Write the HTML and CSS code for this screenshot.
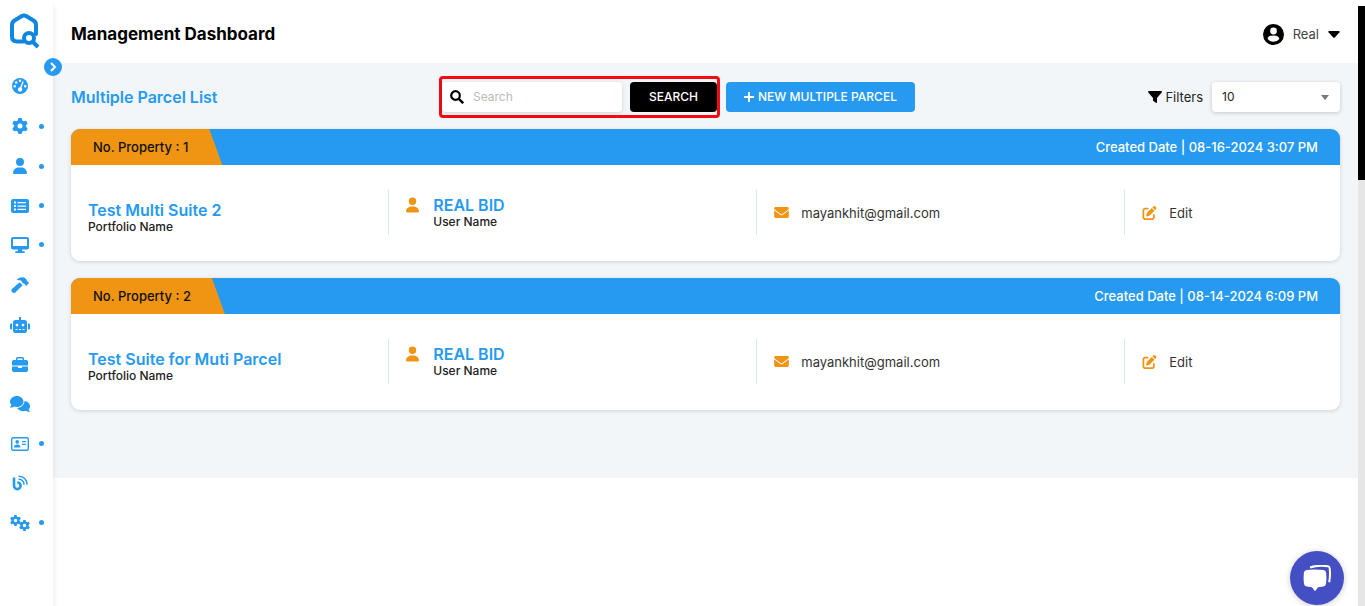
FILE: index.html
```html
<!DOCTYPE html>
<html lang="en">
<head>
<meta charset="utf-8">
<meta name="viewport" content="width=device-width, initial-scale=1">
<title>Management Dashboard</title>
<link rel="stylesheet" href="styles.css">
</head>
<body>
<svg class="sprite" aria-hidden="true">
  <symbol id="gear" viewBox="0 0 512 512"><path d="M495.9 166.6c3.2 8.7 .5 18.4-6.4 24.6l-43.3 39.4c1.1 8.3 1.7 16.8 1.7 25.4s-.6 17.1-1.7 25.4l43.3 39.4c6.9 6.2 9.6 15.9 6.4 24.6c-4.4 11.9-9.7 23.3-15.8 34.3l-4.7 8.1c-6.6 11-14 21.4-22.1 31.2c-5.9 7.2-15.7 9.6-24.5 6.8l-55.7-17.7c-13.4 10.3-28.2 18.9-44 25.4l-12.5 57.1c-2 9.1-9 16.3-18.2 17.8c-13.8 2.3-28 3.5-42.5 3.5s-28.7-1.2-42.5-3.5c-9.2-1.5-16.2-8.7-18.2-17.8l-12.5-57.1c-15.8-6.5-30.6-15.1-44-25.4L83.1 425.9c-8.8 2.8-18.6 .3-24.5-6.8c-8.1-9.8-15.5-20.2-22.1-31.2l-4.7-8.1c-6.1-11-11.4-22.4-15.8-34.3c-3.2-8.7-.5-18.4 6.4-24.6l43.3-39.4C64.6 273.1 64 264.6 64 256s.6-17.1 1.7-25.4L22.4 191.2c-6.9-6.2-9.6-15.9-6.4-24.6c4.4-11.9 9.7-23.3 15.8-34.3l4.7-8.1c6.6-11 14-21.4 22.1-31.2c5.9-7.2 15.7-9.6 24.5-6.8l55.7 17.7c13.4-10.3 28.2-18.9 44-25.4l12.5-57.1c2-9.1 9-16.3 18.2-17.8C227.3 1.2 241.5 0 256 0s28.7 1.2 42.5 3.5c9.2 1.5 16.2 8.7 18.2 17.8l12.5 57.1c15.8 6.5 30.6 15.1 44 25.4l55.7-17.7c8.8-2.8 18.6-.3 24.5 6.8c8.1 9.8 15.5 20.2 22.1 31.2l4.7 8.1c6.1 11 11.4 22.4 15.8 34.3zM256 336a80 80 0 1 0 0-160 80 80 0 1 0 0 160z"/></symbol>
  <symbol id="user" viewBox="0 0 448 512"><path d="M224 256A128 128 0 1 0 224 0a128 128 0 1 0 0 256zm-45.7 48C79.8 304 0 383.8 0 482.3C0 498.7 13.3 512 29.7 512H418.3c16.4 0 29.7-13.3 29.7-29.7C448 383.8 368.2 304 269.7 304H178.3z"/></symbol>
  <symbol id="mail" viewBox="0 0 512 384"><path d="M48 0C21.500 0 0 21.500 0 48c0 15 7 29 19 38l218 163c11 9 27 9 38 0L493 86c12-9 19-23 19-38 0-26.500-21.500-48-48-48zM0 112v208c0 35 29 64 64 64h384c35 0 64-29 64-64V112L294 275c-23 17-53 17-76 0z"/></symbol>
  <symbol id="edit" viewBox="0 0 512 512"><path d="M471.600 21.700c-21.900-21.900-57.300-21.900-79.200 0L362.300 51.700l97.900 97.900 30.100-30.100c21.900-21.900 21.900-57.300 0-79.200zM172.400 241.700c-6.100 6.100-10.800 13.600-13.500 21.800l-29.600 88.800c-2.900 8.600-.6 18.100 5.800 24.600s15.900 8.700 24.600 5.800l88.800-29.600c8.200-2.700 15.700-7.400 21.800-13.500L437.700 172.300 339.700 74.300zM96 64C43 64 0 107 0 160V416c0 53 43 96 96 96H352c53 0 96-43 96-96V320c0-17.700-14.300-32-32-32s-32 14.300-32 32v96c0 17.700-14.300 32-32 32H96c-17.700 0-32-14.300-32-32V160c0-17.700 14.300-32 32-32h96c17.700 0 32-14.300 32-32s-14.300-32-32-32z"/></symbol>
</svg>

<div class="app">
  <aside class="sidebar">
    <a class="logo" href="#" aria-label="Home">
      <svg width="32" height="38" viewBox="0 0 32 38" fill="none" stroke="#0f86e0" stroke-width="4" stroke-linecap="round" stroke-linejoin="round">
        <path d="M14 28.500H8q-5 0-5-5V12q0-3 2.500-4.500l7-4.300q2.500-1.300 5 0l7 4.300Q27 9 27 12v9"/>
        <circle cx="20" cy="25" r="5"/>
        <path d="M24 29l5 5" stroke-linecap="butt"/>
      </svg>
    </a>
    <button class="expand" aria-label="Expand menu"><svg width="8" height="10" viewBox="0 0 8 10"><path d="M2 1l4 4-4 4" fill="none" stroke="#fff" stroke-width="2"/></svg></button>
    <nav class="nav" aria-label="Main">
      <a href="#" aria-label="Dashboard"><svg width="16" height="16" viewBox="0 0 16 16"><circle cx="8" cy="8" r="8"/><g fill="#fff"><circle cx="8" cy="2.800" r="1.200"/><circle cx="4.200" cy="4.500" r="1.200"/><circle cx="2.800" cy="8.200" r="1.200"/><circle cx="13.200" cy="8.200" r="1.200"/><path d="M10.500 3.200l1.300.5-2.300 6a2.200 2.200 0 1 1-1.300-.5z"/></g></svg></a>
      <a class="more" href="#" aria-label="Settings"><svg width="16" height="16"><use href="#gear"/></svg></a>
      <a class="more" href="#" aria-label="Users"><svg width="14" height="16"><use href="#user"/></svg></a>
      <a class="more" href="#" aria-label="Listings"><svg width="18" height="14" viewBox="0 0 18 14"><path fill-rule="evenodd" d="M2 0h14a2 2 0 0 1 2 2v10a2 2 0 0 1-2 2H2a2 2 0 0 1-2-2V2a2 2 0 0 1 2-2zm1 2.500v2h2v-2zm0 3.500v2h2v-2zm0 3.500v2h2v-2zM6.500 3v1.200h8.500V3zm0 3.500v1.200h8.500V6.500zm0 3.300V11h8.500V9.800z"/></svg></a>
      <a class="more" href="#" aria-label="Displays"><svg width="18" height="16" viewBox="0 0 18 16"><path fill-rule="evenodd" d="M2 0h14a2 2 0 0 1 2 2v8.500a2 2 0 0 1-2 2h-5l.4 1.700H13a.9.900 0 0 1 0 1.800H5a.9.900 0 0 1 0-1.800h1.600l.4-1.700H2a2 2 0 0 1-2-2V2a2 2 0 0 1 2-2zm0 2v7h14V2z"/></svg></a>
      <a href="#" aria-label="Auctions"><svg width="18" height="16" viewBox="0 0 18 16"><path d="M6 2.500Q8.500 0 12 .3q1.500.2 2.600 1.300l.9 1q.4.500.3 1.300l1.900 1.400q.4.500 0 1l-2 2.200q-.5.400-1 0l-1.300-1.700q-1 0-1.700-.8l-.8-.9q-.6-.7-.6-1.600L6 3z"/><path d="M8.600 5.200l3 3-7.300 7.200q-1.400 1.200-3 -.2t-.4-3.200z"/></svg></a>
      <a href="#" aria-label="Robot"><svg width="20" height="16" viewBox="0 0 20 16"><path fill-rule="evenodd" d="M9 .8a1 1 0 0 1 2 0V3h3.500A2.500 2.500 0 0 1 17 5.500V13.500a2.500 2.500 0 0 1-2.500 2.500h-9A2.500 2.500 0 0 1 3 13.500v-8A2.500 2.500 0 0 1 5.500 3H9zM7 6.700a1.400 1.400 0 1 0 0 2.800 1.400 1.400 0 0 0 0-2.800zm6 0a1.400 1.400 0 1 0 0 2.800 1.400 1.400 0 0 0 0-2.800zM5.500 12v1h2v-1zm3.500 0v1h2v-1zm3.500 0v1h2v-1zM0 7.500Q0 6.500 1 6.500h1v6H1q-1 0-1-1zM18 6.500h1q1 0 1 1v4q0 1-1 1h-1z"/></svg></a>
      <a href="#" aria-label="Portfolio"><svg width="16" height="15" viewBox="0 0 16 15"><path fill-rule="evenodd" d="M4 3V1.500Q4 0 5.500 0h5Q12 0 12 1.500V3h2.300Q16 3 16 4.700V8.500H0V4.700Q0 3 1.700 3zm1.500 0h5V1.500h-5zM0 9.500h6v.8q0 .7.700.7h2.600q.7 0 .7-.7v-.8h6v3.800q0 1.700-1.700 1.700H1.700Q0 15 0 13.300z"/></svg></a>
      <a href="#" aria-label="Messages"><svg width="20" height="16" viewBox="0 0 20 16"><path d="M6.800 0c3.800 0 6.700 2.500 6.700 5.500S10.600 11 6.800 11c-1 0-1.800-.1-2.600-.4-1 .6-2.300 1.200-3.700 1.200-.4 0-.6-.5-.3-.8.500-.6 1-1.400 1.200-2.200C.5 7.900 0 6.700 0 5.500 0 2.500 3 0 6.800 0z"/><path d="M14.500 5c3 .2 5.500 2.500 5.500 5.200 0 1.200-.5 2.300-1.300 3.200.2.800.7 1.600 1.200 2.100.2.200 0 .5-.3.500-1.400 0-2.600-.6-3.600-1.200-.8.300-1.600.4-2.500.4-3 0-5.400-1.500-6.300-3.300 4-.2 7.200-3.100 7.300-6.900z"/></svg></a>
      <a class="more" href="#" aria-label="Contacts"><svg width="18" height="14" viewBox="0 0 18 14"><rect x=".7" y=".7" width="16.600" height="12.600" rx="1.500" fill="none" stroke="currentColor" stroke-width="1.400"/><circle cx="6.200" cy="4.900" r="1.800"/><path d="M3 10.500q0-3 3.200-3t3.200 3zM11 4h4v1.200h-4zM11 6.700h4v1.200h-4z"/></svg></a>
      <a href="#" aria-label="Blog"><svg width="16" height="16" viewBox="0 0 16 16" fill="none" stroke="currentColor"><path d="M2 2.500v8.300a3.300 3.300 0 1 0 3.300-3.300" stroke-width="2.600"/><path d="M7 1.200a8 8 0 0 1 8 8M7 4.200a5 5 0 0 1 5 5" stroke-width="1.400" stroke-linecap="round"/></svg></a>
      <a class="more" href="#" aria-label="System"><svg width="20" height="16" viewBox="0 0 20 16"><use href="#gear" width="11" height="11"/><use href="#gear" x="9" y="5" width="11" height="11"/></svg></a>
    </nav>
  </aside>

  <div class="page">
    <header class="topbar">
      <h1>Management Dashboard</h1>
      <button class="account">
        <svg width="21" height="21" viewBox="0 0 21 21"><circle cx="10.500" cy="10.500" r="10.500"/><circle cx="10.500" cy="7" r="3.400" fill="#fff"/><path d="M4.700 15q0-3.500 5.800-3.500t5.800 3.500q-2 2.800-5.800 2.800T4.700 15z" fill="#fff"/></svg>
        <span>Real</span>
        <svg width="12" height="7" viewBox="0 0 12 7"><path d="M1 0h10q1 .4.500 1.200L6.800 6.500q-.8.700-1.600 0L.5 1.200Q0 .4 1 0z"/></svg>
      </button>
    </header>

    <main class="content">
      <div class="toolbar">
        <h2>Multiple Parcel List</h2>
        <form class="search" role="search">
          <label class="field">
            <svg width="14" height="14" viewBox="0 0 14 14" fill="none" stroke="#000"><circle cx="5.500" cy="5.500" r="4.300" stroke-width="2.200"/><path d="M8.800 8.800l4.400 4.400" stroke-width="2.400"/></svg>
            <input type="text" placeholder="Search" aria-label="Search">
          </label>
          <button class="btn dark" type="button">SEARCH</button>
        </form>
        <button class="btn blue"><svg width="10" height="10" viewBox="0 0 10 10"><path d="M5 0v10M0 5h10" stroke="#fff" stroke-width="2"/></svg>NEW MULTIPLE PARCEL</button>
        <div class="filters">
          <svg width="14" height="12" viewBox="0 0 14 12"><path d="M.8 0h12.400q1.200.4.500 1.400L9 7v4.300q-.3 1-1.200.5L5.400 10 5 9.500V7L.3 1.400Q-.2.400.8 0z"/></svg>
          <label for="size">Filters</label>
          <div class="select">
            <select id="size"><option>10</option><option>25</option><option>50</option></select>
            <svg width="8" height="5" viewBox="0 0 8 5"><path d="M0 0h8L4 5z" fill="#777"/></svg>
          </div>
        </div>
      </div>

      <article class="card">
        <div class="card-head"><span class="tab">No. Property : 1</span><span>Created Date | 08-16-2024 3:07 PM</span></div>
        <div class="card-body">
          <div class="cell name"><div><h3>Test Multi Suite 2</h3><p>Portfolio Name</p></div></div>
          <div class="cell person"><svg width="13" height="18"><use href="#user"/></svg><div><h3>REAL BID</h3><p>User Name</p></div></div>
          <div class="cell"><svg width="15" height="11"><use href="#mail"/></svg><span>mayankhit@gmail.com</span></div>
          <div class="cell"><a class="edit" href="#"><svg width="15" height="14"><use href="#edit"/></svg>Edit</a></div>
        </div>
      </article>

      <article class="card">
        <div class="card-head"><span class="tab">No. Property : 2</span><span>Created Date | 08-14-2024 6:09 PM</span></div>
        <div class="card-body">
          <div class="cell name"><div><h3>Test Suite for Muti Parcel</h3><p>Portfolio Name</p></div></div>
          <div class="cell person"><svg width="13" height="18"><use href="#user"/></svg><div><h3>REAL BID</h3><p>User Name</p></div></div>
          <div class="cell"><svg width="15" height="11"><use href="#mail"/></svg><span>mayankhit@gmail.com</span></div>
          <div class="cell"><a class="edit" href="#"><svg width="15" height="14"><use href="#edit"/></svg>Edit</a></div>
        </div>
      </article>
    </main>
  </div>

  <div class="scroll-track"><div class="scroll-thumb"></div></div>
</div>

<button class="chat" aria-label="Open chat">
  <svg width="28" height="27" viewBox="0 0 28 27"><path d="M7 2.500q9-3 18-1.200 1.500.3 1.700 2 .8 7-.5 14" fill="none" stroke="#fff" stroke-width="2"/><path d="M3.500 5q8-1.200 17 0 2.500.4 2.700 3 .5 5.500-.2 11-.4 2.300-2.600 2.600l-5.400.6-3 4-3-4-5.200-.6Q1.400 21.300 1 19q-.7-5.500-.2-11Q1 5.400 3.500 5z" fill="#fff"/></svg>
</button>
</body>
</html>
```
FILE: styles.css
```css
* { box-sizing: border-box; }

body {
  margin: 0;
  background: #fff;
  color: #222;
  font: 400 13px/18px Inter, "Liberation Sans", sans-serif;
}

h1, h2, h3, p { margin: 0; }
svg { flex: none; display: block; }
a { color: inherit; text-decoration: none; }

button, input, select {
  border: 0;
  margin: 0;
  padding: 0;
  background: none;
  color: inherit;
  font: inherit;
}

.sprite { position: absolute; width: 0; height: 0; }

.app { display: flex; min-height: 100vh; }

/* Sidebar */
.sidebar {
  position: relative;
  flex: none;
  width: 53px;
  background: #fff;
  box-shadow: 0 5px 6px rgba(0, 0, 0, .1);
  z-index: 1;
}

.logo { display: block; padding: 13px 0 15px 9px; }

.expand {
  position: absolute;
  top: 58px;
  right: -9px;
  width: 18px;
  height: 18px;
  display: grid;
  place-items: center;
  border-radius: 50%;
  background: #259af0;
}

.nav {
  display: flex;
  flex-direction: column;
  min-height: 477px;
  color: #259af0;
  fill: currentColor;
}

.nav a {
  position: relative;
  flex: 1;
  display: grid;
  place-items: center;
  width: 40px;
}

.more::after {
  content: "";
  position: absolute;
  right: -4px;
  width: 5px;
  height: 5px;
  border-radius: 50%;
  background: #259af0;
}

/* Header */
.page { flex: 1; min-width: 0; }

.topbar {
  display: flex;
  align-items: center;
  justify-content: space-between;
  padding: 22px 18px 17px;
}

h1 { color: #000; font-size: 17px; font-weight: 700; line-height: 24px; }

.account { display: flex; align-items: center; gap: 9px; color: #444; }
.account svg { fill: #000; }

/* Content */
.content {
  display: flex;
  flex-direction: column;
  gap: 17px;
  padding: 18px 18px 68px;
  background: #f3f6f9;
}

.toolbar { display: flex; align-items: center; height: 31px; }

h2 {
  flex: 0 0 29%;
  color: #259af0;
  font-size: 16px;
  font-weight: 600;
}

.search {
  display: flex;
  gap: 8px;
  border: 3px solid #f30a12;
  border-radius: 4px;
  padding: 3px 0;
}

.field {
  display: flex;
  align-items: center;
  gap: 9px;
  width: 180px;
  padding-left: 8px;
  border-radius: 4px;
  background: #fff;
  box-shadow: 0 1px 4px rgba(0, 0, 0, .15);
}

.field input { flex: 1; min-width: 0; outline: 0; font-size: 12px; }
.field input::placeholder { color: #bbb; opacity: 1; }

.btn {
  display: flex;
  align-items: center;
  justify-content: center;
  gap: 4px;
  height: 30px;
  border-radius: 4px;
  color: #fff;
  font-size: 12px;
  font-weight: 500;
}

.dark { width: 87px; background: #000; }
.blue { margin-left: 6px; padding: 0 18px; background: #259af0; }

.filters { display: flex; align-items: center; gap: 3px; margin-left: auto; font-size: 13px; }

.select { position: relative; margin-left: 6px; }

.select select {
  appearance: none;
  width: 128px;
  height: 30px;
  padding-left: 10px;
  border-radius: 4px;
  background: #fff;
  box-shadow: 0 1px 4px rgba(0, 0, 0, .2);
  font-size: 12px;
}

.select svg { position: absolute; top: 13px; right: 11px; pointer-events: none; }

/* Cards */
.card {
  overflow: hidden;
  border-radius: 9px;
  background: #fff;
  box-shadow: 0 1px 4px rgba(0, 0, 0, .15);
}

.card-head {
  display: flex;
  justify-content: space-between;
  padding-right: 22px;
  background: #259af0;
  color: #fff;
  font-size: 13px;
  font-weight: 500;
  line-height: 36px;
}

.tab {
  padding: 0 34px 0 22px;
  background: #ef9413;
  color: #111;
  clip-path: polygon(0 0, calc(100% - 13px) 0, 100% 100%, 0 100%);
}

.card-body {
  display: grid;
  grid-template-columns: 25fr 29fr 29fr 17fr;
  padding: 25px 0 26px;
}

.cell {
  display: flex;
  align-items: center;
  gap: 12px;
  min-height: 45px;
  padding-left: 17px;
  border-left: 1px solid #d5e6f4;
  color: #333;
  font-size: 13px;
}

.cell svg { fill: #ef9413; }
.name { border: 0; padding-top: 10px; }
.person { align-items: flex-start; gap: 14px; padding-top: 6px; }

h3 { color: #259af0; font-size: 16px; font-weight: 600; line-height: 18px; }
.cell p { color: #222; font-size: 12px; font-weight: 500; line-height: 16px; }

.edit { display: flex; align-items: center; gap: 12px; }

/* Scrollbar */
.scroll-track { flex: none; width: 7px; margin-top: 6px; background: #e6e6e6; }
.scroll-thumb { height: 174px; background: #000; }

.chat {
  position: fixed;
  right: 21px;
  bottom: 1px;
  z-index: 2;
  width: 54px;
  height: 54px;
  display: grid;
  place-items: center;
  border-radius: 50%;
  background: #454fc4;
  box-shadow: 0 1px 6px rgba(0, 0, 0, .2);
}
```
